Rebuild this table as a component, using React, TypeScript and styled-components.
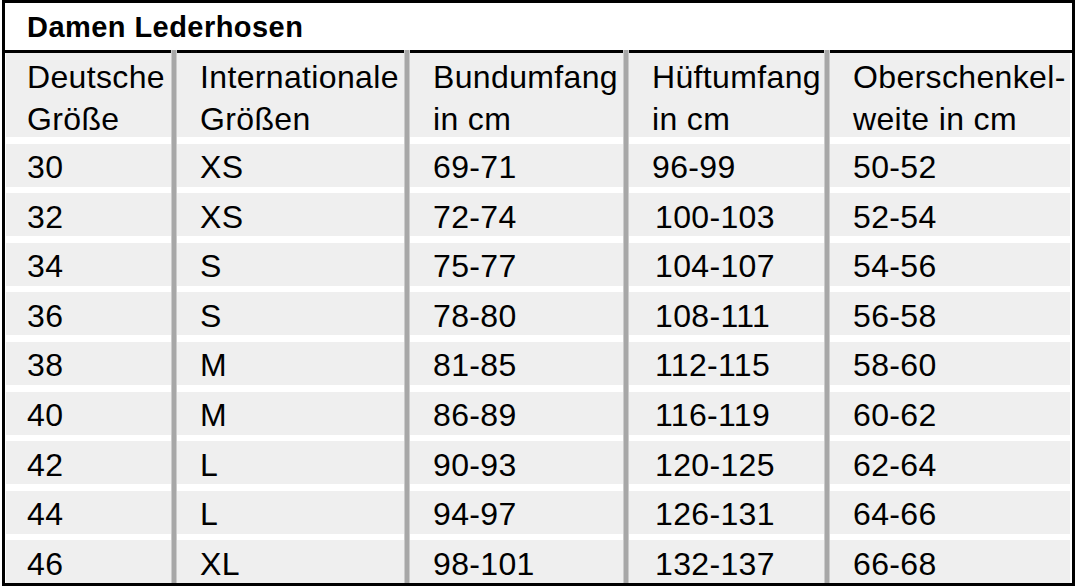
import React from "react";
import styled, { createGlobalStyle } from "styled-components";

const GlobalStyle = createGlobalStyle`
  html, body {
    margin: 0;
    padding: 0;
    background: #ffffff;
  }
  body {
    font-family: "Liberation Sans", Arial, sans-serif;
    color: #000000;
  }
`;

const Frame = styled.div`
  width: 1067px;
  margin-left: 2px;
  border: 3px solid #000000;
  background: #ffffff;
`;

const Title = styled.div`
  height: 50px;
  display: flex;
  align-items: center;
  padding-left: 22px;
  padding-top: 1px;
  box-sizing: border-box;
  font-size: 29px;
  letter-spacing: 0.45px;
  font-weight: bold;
  border-bottom: 3px solid #000000;
`;

const Grid = styled.div`
  display: grid;
  grid-template-columns: 165px 6px 227px 6px 213px 6px 195px 6px 240px;
  grid-template-rows: 84px;
  grid-auto-rows: 43px;
  row-gap: 6.6px;
  padding: 0 2px 0 1px;
`;

const Separator = styled.div<{ $col: number }>`
  grid-column: ${(p) => p.$col};
  grid-row: 1 / span 10;
  margin-top: -3px;
  background: #a7a7a7;
  border-left: 1px solid #cbcbcb;
  border-right: 1px solid #cbcbcb;
`;

const Cell = styled.div<{ $col: number; $head?: boolean; $indent?: number }>`
  grid-column: ${(p) => p.$col};
  background: #efefef;
  font-size: 32px;
  letter-spacing: 0.35px;
  line-height: 42px;
  padding-left: ${(p) => (p.$col === 1 ? 21 : 23) + (p.$indent ?? 0)}px;
  display: flex;
  flex-direction: column;
  justify-content: center;
  white-space: nowrap;
  padding-top: ${(p) => (p.$head ? 6 : 4)}px;
  box-sizing: border-box;
`;

const headers = [
  ["Deutsche", "Größe"],
  ["Internationale", "Größen"],
  ["Bundumfang", "in cm"],
  ["Hüftumfang", "in cm"],
  ["Oberschenkel-", "weite in cm"],
];

const rows = [
  ["30", "XS", "69-71", "96-99", "50-52"],
  ["32", "XS", "72-74", "100-103", "52-54"],
  ["34", "S", "75-77", "104-107", "54-56"],
  ["36", "S", "78-80", "108-111", "56-58"],
  ["38", "M", "81-85", "112-115", "58-60"],
  ["40", "M", "86-89", "116-119", "60-62"],
  ["42", "L", "90-93", "120-125", "62-64"],
  ["44", "L", "94-97", "126-131", "64-66"],
  ["46", "XL", "98-101", "132-137", "66-68"],
];

const colOf = (i: number) => i * 2 + 1;

export default function App() {
  return (
    <>
      <GlobalStyle />
      <Frame>
        <Title>Damen Lederhosen</Title>
        <Grid>
          {headers.map((h, i) => (
            <Cell key={`h${i}`} $col={colOf(i)} $head style={{ gridRow: 1 }}>
              <span>{h[0]}</span>
              <span>{h[1]}</span>
            </Cell>
          ))}
          {rows.map((r, ri) =>
            r.map((v, ci) => (
              <Cell
                key={`${ri}-${ci}`}
                $col={colOf(ci)}
                $indent={ci === 3 && ri > 0 ? 3 : 0}
                style={{ gridRow: ri + 2 }}
              >
                <span>{v}</span>
              </Cell>
            ))
          )}
          {[2, 4, 6, 8].map((c) => (
            <Separator key={c} $col={c} />
          ))}
        </Grid>
      </Frame>
    </>
  );
}
